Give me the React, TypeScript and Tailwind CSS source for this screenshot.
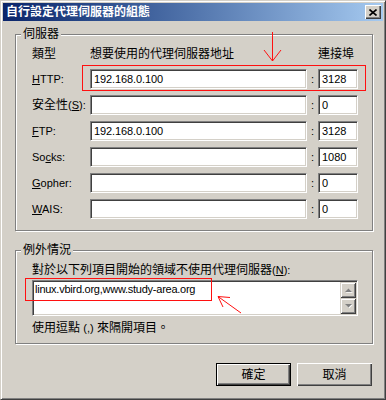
import React from 'react'

type Row = { label: React.ReactNode; addr: string; port: string }

const rows: Row[] = [
  { label: <span className="text-[11px]"><u>H</u>TTP:</span>, addr: '192.168.0.100', port: '3128' },
  { label: <span>安全性<span className="text-[11px]">(<u>S</u>):</span></span>, addr: '', port: '0' },
  { label: <span className="text-[11px]"><u>F</u>TP:</span>, addr: '192.168.0.100', port: '3128' },
  { label: <span className="text-[11px]">So<u>c</u>ks:</span>, addr: '', port: '1080' },
  { label: <span className="text-[11px]"><u>G</u>opher:</span>, addr: '', port: '0' },
  { label: <span className="text-[11px]"><u>W</u>AIS:</span>, addr: '', port: '0' },
]

const ScrollArrow = ({ up }: { up?: boolean }) => (
  <div className="flex h-[16px] w-[16px] items-center justify-center bg-[#d4d0c8] shadow-[inset_1px_1px_#d4d0c8,inset_-1px_-1px_#404040,inset_2px_2px_#fff,inset_-2px_-2px_#808080]">
    <svg width="9" height="6" viewBox="0 0 9 6">
      {up ? (
        <>
          <polygon points="1,5 8,5 4.5,1.5" fill="#fff" transform="translate(0.8,0.8)" />
          <polygon points="1,5 8,5 4.5,1.5" fill="#808080" />
        </>
      ) : (
        <>
          <polygon points="1,1 8,1 4.5,4.5" fill="#fff" transform="translate(0.8,0.8)" />
          <polygon points="1,1 8,1 4.5,4.5" fill="#808080" />
        </>
      )}
    </svg>
  </div>
)

export default function App() {
  return (
    <div className="relative h-[400px] w-[386px] overflow-hidden border border-t-[#d4d0c8] border-l-[#d4d0c8] border-r-[#404040] border-b-[#404040] bg-[#d4d0c8] p-[2px] font-['Liberation_Sans','Noto_Sans_CJK_TC',sans-serif] text-[12px] leading-[14px] text-black shadow-[inset_1px_1px_#fff,inset_-1px_-1px_#808080]">
      {/* title bar */}
      <div className="flex h-[18px] items-center justify-between bg-linear-to-r from-[#0a246a] to-[#a6caf0] pl-[3px] pr-[2px]">
        <span className="font-bold text-white">自行設定代理伺服器的組態</span>
        <button className="flex h-[14px] w-[16px] items-center justify-center bg-[#d4d0c8] shadow-[inset_1px_1px_#fff,inset_-1px_-1px_#404040,inset_-2px_-2px_#808080]">
          <svg width="8" height="7" viewBox="0 0 8 7">
            <path d="M0.5 0.5 L7.5 6.5 M7.5 0.5 L0.5 6.5" stroke="#000" strokeWidth="1.6" />
          </svg>
        </button>
      </div>

      {/* servers group */}
      <div className="ml-[12px] mt-[13px] w-[358px] border border-[#808080] pb-[11px] shadow-[inset_1px_1px_#fff,1px_1px_#fff]">
        <div className="-mt-[8px] ml-[5px] w-fit bg-[#d4d0c8] px-[2px]">伺服器</div>
        <div className="mt-[6px] grid grid-cols-[58px_217px_11px_40px] items-center gap-y-[6px] pl-[16px]">
          <span className="mb-[2px]">類型</span>
          <span className="mb-[2px]">想要使用的代理伺服器地址</span>
          <span />
          <span className="mb-[2px] whitespace-nowrap">連接埠</span>
          {rows.map((r, i) => (
            <React.Fragment key={i}>
              <div className="whitespace-nowrap">{r.label}</div>
              <input
                readOnly
                value={r.addr}
                className="h-[20px] w-full border border-t-[#808080] border-l-[#808080] border-b-white border-r-white bg-white px-[3px] text-[11px] tracking-[-0.1px] outline-none shadow-[inset_1px_1px_#404040,inset_-1px_-1px_#d4d0c8]"
              />
              <span className="text-center text-[11px]">:</span>
              <input
                readOnly
                value={r.port}
                className="h-[20px] w-full border border-t-[#808080] border-l-[#808080] border-b-white border-r-white bg-white px-[3px] text-[11px] outline-none shadow-[inset_1px_1px_#404040,inset_-1px_-1px_#d4d0c8]"
              />
            </React.Fragment>
          ))}
        </div>
      </div>

      {/* exceptions group */}
      <div className="ml-[12px] mt-[19px] w-[358px] border border-[#808080] pb-[8px] shadow-[inset_1px_1px_#fff,1px_1px_#fff]">
        <div className="-mt-[8px] ml-[5px] w-fit bg-[#d4d0c8] px-[2px]">例外情況</div>
        <div className="pl-[16px]">
          <div className="mt-[6px]">
            對於以下列項目開始的領域不使用代理伺服器<span className="text-[11px]">(<u>N</u>):</span>
          </div>
          <div className="mt-[3px] flex h-[36px] w-[326px] border border-t-[#808080] border-l-[#808080] border-b-white border-r-white bg-white p-[1px] shadow-[inset_1px_1px_#404040,inset_-1px_-1px_#d4d0c8]">
            <div className="flex-1 pl-[1px] pt-[1px] text-[11px] leading-[13px] tracking-[-0.25px]">
              linux.vbird.org,www.study-area.org
            </div>
            <div className="flex flex-col">
              <ScrollArrow up />
              <ScrollArrow />
            </div>
          </div>
          <div className="mt-[5px]">
            使用逗點 <span className="text-[11px]">(,)</span> 來隔開項目。
          </div>
        </div>
      </div>

      {/* buttons */}
      <div className="mt-[19px] flex justify-end gap-[6px] pr-[11px]">
        <button className="h-[23px] w-[75px] border border-black bg-[#d4d0c8] shadow-[inset_1px_1px_#fff,inset_-1px_-1px_#404040,inset_-2px_-2px_#808080]">
          確定
        </button>
        <button className="h-[23px] w-[75px] bg-[#d4d0c8] shadow-[inset_1px_1px_#fff,inset_-1px_-1px_#404040,inset_-2px_-2px_#808080]">
          取消
        </button>
      </div>

      {/* red annotations */}
      <svg
        className="pointer-events-none absolute left-[-1px] top-[-1px]"
        width="386"
        height="400"
        viewBox="0 0 386 400"
        fill="none"
        stroke="#ff1010"
        strokeWidth="1"
      >
        <rect x="82.5" y="65.5" width="283" height="25" />
        <path d="M272.5 32 L272.5 61 M264 50 L272.5 61 L281 50" />
        <rect x="25.5" y="278.5" width="186" height="22" />
        <path d="M241 313 L218 296.5 M223 307 L218 296.5 L230 297.5" />
      </svg>
    </div>
  )
}
